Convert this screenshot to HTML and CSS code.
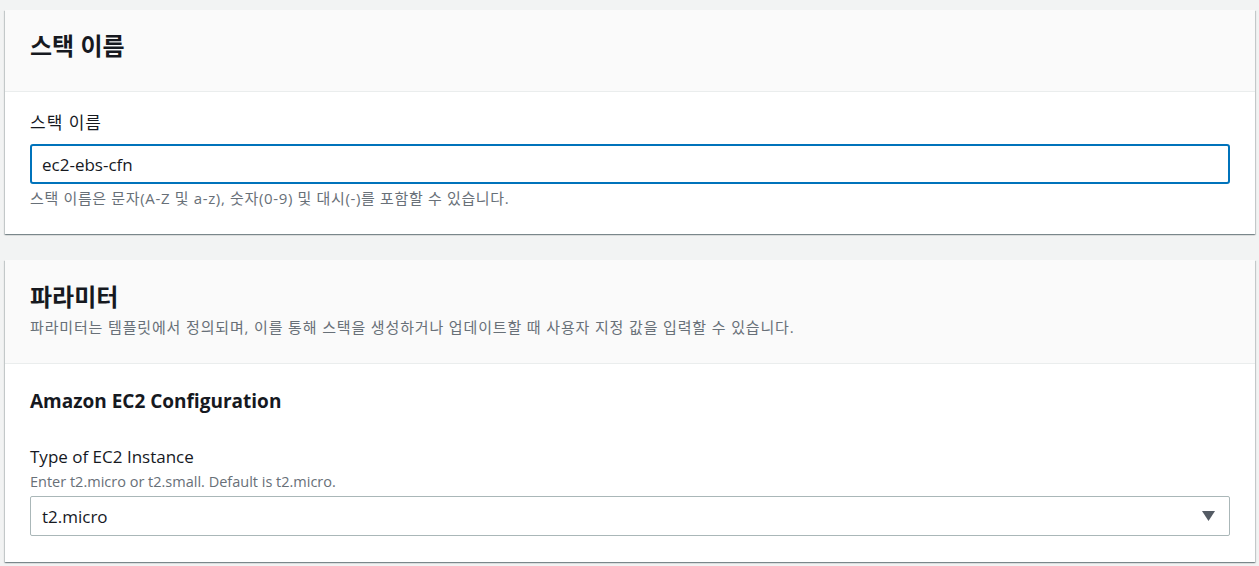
FILE: index.html
```html
<!DOCTYPE html>
<html lang="ko">
<head>
  <meta charset="UTF-8" />
  <meta name="viewport" content="width=device-width, initial-scale=1.0" />
  <title>스택 세부 정보 지정</title>
  <link rel="stylesheet" href="styles.css">
</head>
<body>
  <div class="card">
    <div class="card-header">
      <h2>스택 이름</h2>
    </div>
    <div class="card-body">
      <label for="stackName" class="ko">스택 이름</label>
      <input type="text" id="stackName" class="text-input focused" value="ec2-ebs-cfn" />
      <p class="constraint">스택 이름은 문자(A-Z 및 a-z), 숫자(0-9) 및 대시(-)를 포함할 수 있습니다.</p>
    </div>
  </div>

  <div class="card">
    <div class="card-header">
      <h2>파라미터</h2>
      <p class="description">파라미터는 템플릿에서 정의되며, 이를 통해 스택을 생성하거나 업데이트할 때 사용자 지정 값을 입력할 수 있습니다.</p>
    </div>
    <div class="card-body">
      <h3>Amazon EC2 Configuration</h3>
      <label for="instanceType" class="param-label">Type of EC2 Instance</label>
      <p class="param-desc">Enter t2.micro or t2.small. Default is t2.micro.</p>
      <div class="select-box" id="instanceType">
        <span>t2.micro</span>
        <svg class="caret" width="13" height="10" viewBox="0 0 13 10"><path d="M0 0 H13 L6.5 10 Z" fill="#545b64"/></svg>
      </div>
    </div>
  </div>
</body>
</html>
```

FILE: styles.css
```css
body {
  font-family: 'Open Sans', 'Noto Sans CJK KR', sans-serif;
  background-color: #f2f3f3;
  margin: 0;
  padding: 10px 4px 0 5px;
  color: #16191f;
}
.card {
  background: #ffffff;
  box-shadow: 0 1px 1px 0 rgba(0, 28, 36, 0.3), 1px 1px 1px 0 rgba(0, 28, 36, 0.15), -1px 1px 1px 0 rgba(0, 28, 36, 0.15);
  margin-bottom: 26px;
}
.card-header {
  background-color: #fafafa;
  border-bottom: 1px solid #eaeded;
  padding: 20px 25px 29px;
}
.card-header h2 {
  margin: 0;
  font-size: 24px;
  line-height: 32px;
  font-weight: 700;
}
.card + .card .card-header {
  padding: 21px 25px 26px;
}
.card-header .description {
  margin: 4px 0 0;
  font-size: 15px;
  line-height: 20px;
  letter-spacing: 0.85px;
  color: #687078;
}
.card-body {
  padding: 19px 25px 26px;
}
label {
  display: block;
  font-size: 17px;
  line-height: 24px;
  margin-bottom: 9px;
}
label.ko {
  letter-spacing: 1px;
}
.text-input {
  display: block;
  width: 100%;
  height: 40px;
  box-sizing: border-box;
  padding: 0 11px;
  font-family: inherit;
  font-size: 17px;
  color: #16191f;
  border: 1px solid #aab7b8;
  border-radius: 2px;
  outline: none;
}
.text-input.focused {
  border: 2px solid #0073bb;
  border-radius: 3px;
  padding: 0 10px;
}
.constraint {
  margin: 4px 0 0;
  font-size: 15px;
  line-height: 20px;
  letter-spacing: 0.65px;
  color: #687078;
}
.card-body h3 {
  margin: 5px 0 31px;
  font-size: 19px;
  line-height: 26px;
  font-weight: 700;
}
.param-label {
  margin-bottom: 3px;
}
.param-desc {
  margin: 0 0 4px;
  font-size: 14.5px;
  line-height: 20px;
  color: #687078;
}
.select-box {
  display: flex;
  align-items: center;
  justify-content: space-between;
  height: 40px;
  box-sizing: border-box;
  padding: 0 14px 0 11px;
  border: 1px solid #aab7b8;
  border-radius: 2px;
  font-size: 17px;
}
.caret {
  display: block;
}
```
